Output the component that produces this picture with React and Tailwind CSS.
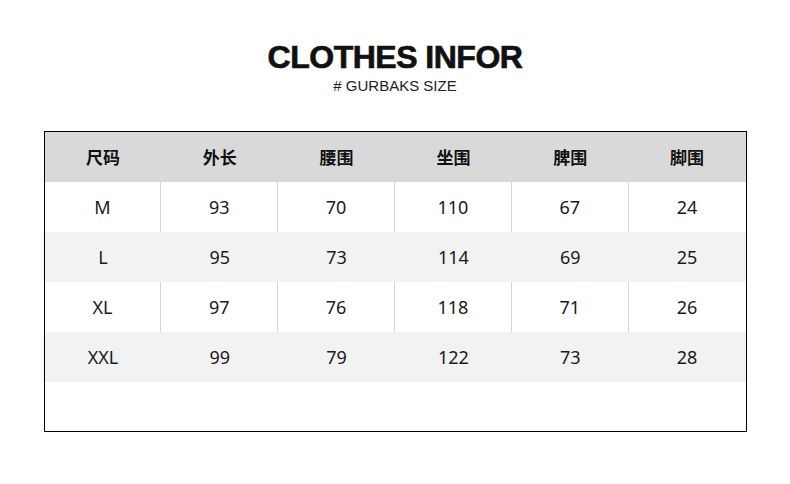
import React from "react";

const headers = ["尺码", "外长", "腰围", "坐围", "脾围", "脚围"];
const rows = [
  ["M", "93", "70", "110", "67", "24"],
  ["L", "95", "73", "114", "69", "25"],
  ["XL", "97", "76", "118", "71", "26"],
  ["XXL", "99", "79", "122", "73", "28"],
];

export default function App() {
  return (
    <div
      className="w-[790px] h-[484px] bg-white flex flex-col items-center"
      style={{ fontFamily: '"Noto Sans", "Noto Sans CJK SC", sans-serif' }}
    >
      <div
        className="mt-[41px] h-[32px] text-[32px] leading-[32px] font-black tracking-[-0.5px] text-[#111] [-webkit-text-stroke:0.7px_#111]"
        style={{ fontFamily: '"Liberation Sans", Arial, sans-serif' }}
      >
        CLOTHES INFOR
      </div>
      <div
        className="mt-[5px] h-[15px] text-[15px] leading-[15px] text-[#222]"
        style={{ fontFamily: '"Liberation Sans", Arial, sans-serif' }}
      >
        # GURBAKS SIZE
      </div>
      <div className="mt-[38px] w-[703px] h-[301px] border border-black flex flex-col">
        <div className="h-[50px] bg-[#d9d9d9] grid grid-cols-6 shrink-0">
          {headers.map((h) => (
            <div
              key={h}
              className="flex items-center justify-center text-[17px] font-bold text-[#111]"
              style={{ fontFamily: '"Noto Sans CJK SC", sans-serif' }}
            >
              {h}
            </div>
          ))}
        </div>
        {rows.map((r, i) => {
          const gray = i % 2 === 1;
          return (
            <div
              key={r[0]}
              className={
                "h-[50px] grid grid-cols-6 shrink-0 " + (gray ? "bg-[#f2f2f2]" : "bg-white")
              }
            >
              {r.map((c, j) => (
                <div
                  key={j}
                  className={
                    "flex items-center justify-center text-[18px] text-[#1a1a1a] " +
                    (!gray && j < 5 ? "border-r border-[#d6d6d6]" : "")
                  }
                >
                  {c}
                </div>
              ))}
            </div>
          );
        })}
        <div className="flex-1 bg-white" />
      </div>
    </div>
  );
}
